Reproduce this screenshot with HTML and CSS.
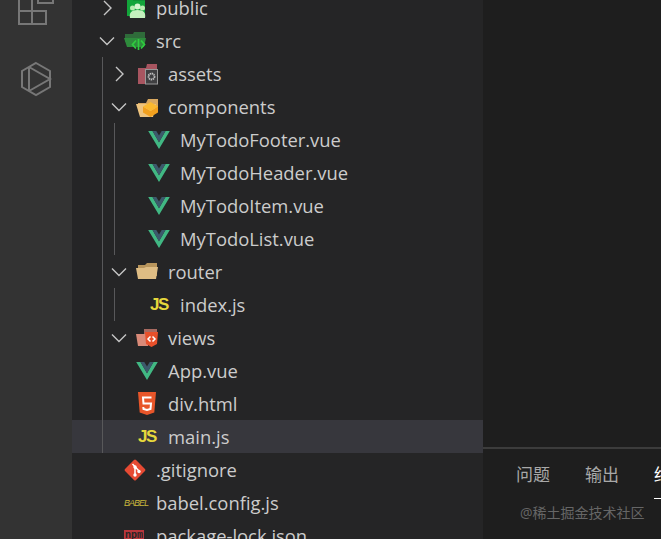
FILE: index.html
```html
<!DOCTYPE html>
<html lang="en">
<head>
  <meta charset="UTF-8">
  <meta name="viewport" content="width=device-width, initial-scale=1.0">
  <title>Explorer</title>
  <link rel="stylesheet" href="styles.css">
</head>
<body>
  <svg class="defs" width="0" height="0">
    <symbol id="right" viewBox="0 0 16 16"><path d="M5 1l7 7-7 7" fill="none" stroke="#c5c5c5" stroke-width="1.4"/></symbol>
    <symbol id="down" viewBox="0 0 16 16"><path d="M1 4.500l7 7 7-7" fill="none" stroke="#c5c5c5" stroke-width="1.4"/></symbol>
    <symbol id="vue" viewBox="0 2 24 20">
      <path d="M0 2h4.800L12 14.500 19.200 2H24L12 22z" fill="#41b883"/>
      <path d="M4.800 2H9l3 5 3-5h4.200L12 14.500z" fill="#3c5a6c"/>
    </symbol>
  </svg>

  <aside class="activity">
    <svg class="activity-icon" viewBox="0 0 36 36" width="36" height="36">
      <path d="M1 8v27h27V22H1M14 8v27M20 1v13h15V1" fill="none" stroke="#777" stroke-width="2"/>
    </svg>
    <svg class="activity-icon" viewBox="0 0 36 36" width="36" height="36">
      <path d="M18 2l14 8v16l-14 8-14-8V10zM11 6v24M11 6l21 12-21 12" fill="none" stroke="#777" stroke-width="2"/>
    </svg>
  </aside>

  <nav class="tree">
    <div class="row">
      <svg class="twistie"><use href="#right"/></svg>
      <span class="icon"><svg viewBox="0 0 24 24" width="24" height="24">
        <path d="M4 0h18v20H4z" fill="#12a53a"/>
        <path d="M11 0h11v4.500H10z" fill="#0d8030"/>
        <circle cx="9.500" cy="12" r="2.500" fill="#b7ecb0"/><circle cx="19.500" cy="12" r="2.500" fill="#b7ecb0"/><circle cx="14.500" cy="10.500" r="3" fill="#d5f5cf"/>
        <path d="M7 22c-1-5 1-8 7.500-8s8.500 3 7.500 8z" fill="#c4f0bd"/>
      </svg></span>
      <span class="label">public</span>
    </div>
    <div class="row">
      <svg class="twistie"><use href="#down"/></svg>
      <span class="icon"><svg viewBox="0 0 24 24" width="24" height="24">
        <path d="M2 5h8l1-2h11v10H2z" fill="#2f6b3a"/>
        <path d="M1 9h22l-2 9H4z" fill="#2e8b3c"/>
        <path d="M13 11.500l-3.500 4 3.500 4M18 11.500l3.500 4-3.500 4M15.500 10v11" fill="none" stroke="#2fcc3f" stroke-width="1.700"/>
      </svg></span>
      <span class="label">src</span>
    </div>
    <div class="row">
      <span class="guide"></span>
      <svg class="twistie"><use href="#right"/></svg>
      <span class="icon"><svg viewBox="0 0 24 24" width="24" height="24">
        <path d="M3 6h8l1-4h10v20H3z" fill="#a85560"/>
        <rect x="10.500" y="7.500" width="12" height="14.500" fill="#3f3f41" stroke="#999"/>
        <circle cx="16.500" cy="14.500" r="3" fill="none" stroke="#c0c0c0" stroke-width="1.800" stroke-dasharray="1.400 .6"/>
      </svg></span>
      <span class="label">assets</span>
    </div>
    <div class="row">
      <span class="guide"></span>
      <svg class="twistie"><use href="#down"/></svg>
      <span class="icon"><svg viewBox="0 0 24 24" width="24" height="24">
        <path d="M3 8h8l2-4h10v10H3z" fill="#d9a860"/>
        <path d="M1 9h20l-3 13H5z" fill="#efc47e"/>
        <path d="M8 11.500l7.500 4.500 7.500-4.500v6L15.500 22 8 17.500z" fill="#f2a01e"/>
        <path d="M15.500 7l7.500 4.500-7.500 4.500L8 11.500z" fill="#fbb92f"/>
      </svg></span>
      <span class="label">components</span>
    </div>
    <div class="row">
      <span class="guide"></span><span class="guide"></span>
      <span class="no-twistie"></span>
      <span class="icon"><svg class="vue" width="22" height="18"><use href="#vue"/></svg></span>
      <span class="label">MyTodoFooter.vue</span>
    </div>
    <div class="row">
      <span class="guide"></span><span class="guide"></span>
      <span class="no-twistie"></span>
      <span class="icon"><svg class="vue" width="22" height="18"><use href="#vue"/></svg></span>
      <span class="label">MyTodoHeader.vue</span>
    </div>
    <div class="row">
      <span class="guide"></span><span class="guide"></span>
      <span class="no-twistie"></span>
      <span class="icon"><svg class="vue" width="22" height="18"><use href="#vue"/></svg></span>
      <span class="label">MyTodoItem.vue</span>
    </div>
    <div class="row">
      <span class="guide"></span><span class="guide"></span>
      <span class="no-twistie"></span>
      <span class="icon"><svg class="vue" width="22" height="18"><use href="#vue"/></svg></span>
      <span class="label">MyTodoList.vue</span>
    </div>
    <div class="row">
      <span class="guide"></span>
      <svg class="twistie"><use href="#down"/></svg>
      <span class="icon"><svg viewBox="0 0 24 24" width="24" height="24">
        <path d="M3 5h7l2-2h10v13H3z" fill="#b8955c"/>
        <path d="M1 8h8l2-1h12l-2 12H3z" fill="#dfbd84"/>
      </svg></span>
      <span class="label">router</span>
    </div>
    <div class="row">
      <span class="guide"></span><span class="guide"></span>
      <span class="no-twistie"></span>
      <span class="icon"><span class="js">JS</span></span>
      <span class="label">index.js</span>
    </div>
    <div class="row">
      <span class="guide"></span>
      <svg class="twistie"><use href="#down"/></svg>
      <span class="icon"><svg viewBox="0 0 24 24" width="24" height="24">
        <path d="M9 3h13v5H9z" fill="#a86a60"/>
        <path d="M1 8h12v12H3z" fill="#d98a78"/>
        <path d="M10 6h13l-1 12-5.500 3-5.500-3z" fill="#e8502a"/>
        <path d="M15.500 10.500l-2.500 2.500 2.500 2.500M17.500 10.500L20 13l-2.500 2.500" fill="none" stroke="#fff" stroke-width="1.500"/>
      </svg></span>
      <span class="label">views</span>
    </div>
    <div class="row">
      <span class="guide"></span>
      <span class="no-twistie"></span>
      <span class="icon"><svg class="vue" width="22" height="18"><use href="#vue"/></svg></span>
      <span class="label">App.vue</span>
    </div>
    <div class="row">
      <span class="guide"></span>
      <span class="no-twistie"></span>
      <span class="icon"><svg viewBox="0 0 24 24" width="24" height="24">
        <path d="M3 0h18l-1.700 20.500L12 23l-7.300-2.500z" fill="#e8562a"/>
        <path d="M16.500 5.500H8l.5 6h7.500l-.5 5.500-3.500 1-3.500-1-.2-2" fill="none" stroke="#fff" stroke-width="2"/>
      </svg></span>
      <span class="label">div.html</span>
    </div>
    <div class="row selected">
      <span class="guide"></span>
      <span class="no-twistie"></span>
      <span class="icon"><span class="js">JS</span></span>
      <span class="label">main.js</span>
    </div>
    <div class="row">
      <span class="no-twistie"></span>
      <span class="icon"><svg viewBox="0 0 24 24" width="24" height="24">
        <rect x="4.200" y="4.200" width="15.600" height="15.600" rx="1.500" transform="rotate(45 12 12)" fill="#e64a33"/>
        <path d="M9.500 6l7 7.500M12 9v8" fill="none" stroke="#fff" stroke-width="1.500"/>
        <circle cx="12" cy="9" r="1.700" fill="#fff"/><circle cx="12" cy="17" r="1.700" fill="#fff"/><circle cx="16" cy="13.500" r="1.700" fill="#fff"/>
      </svg></span>
      <span class="label">.gitignore</span>
    </div>
    <div class="row">
      <span class="no-twistie"></span>
      <span class="icon"><span class="babel">BABEL</span></span>
      <span class="label">babel.config.js</span>
    </div>
    <div class="row">
      <span class="no-twistie"></span>
      <span class="icon"><span class="npm">npm</span></span>
      <span class="label">package-lock.json</span>
    </div>
  </nav>

  <main class="main">
    <div class="editor"></div>
    <section class="panel">
      <span class="tab">问题</span>
      <span class="tab">输出</span>
      <span class="tab active">终端</span>
    </section>
    <div class="watermark">@稀土掘金技术社区</div>
  </main>
</body>
</html>
```

FILE: styles.css
```css
* {
  margin: 0;
  padding: 0;
  box-sizing: border-box;
}

html,
body {
  height: 100%;
  overflow: hidden;
}

body {
  display: flex;
  background: #1e1e1e;
  font-family: "Open Sans", "Noto Sans CJK SC", sans-serif;
  color: #cccccc;
}

.defs {
  position: absolute;
}

/* Activity bar */
.activity {
  width: 72px;
  flex: none;
  display: flex;
  flex-direction: column;
  align-items: center;
  gap: 36px;
  background: #333333;
}

.activity-icon:first-child {
  margin-top: -11px;
}

/* File tree */
.tree {
  width: 411px;
  flex: none;
  margin-top: -9px;
  background: #252526;
}

.row {
  height: 33px;
  display: flex;
  align-items: center;
  padding-left: 30px;
}

.row.selected {
  background: #37373d;
}

.guide {
  width: 12px;
  flex: none;
  align-self: stretch;
  border-left: 1px solid #58585a;
}

.twistie {
  width: 16px;
  height: 16px;
  flex: none;
  margin: 0 4px 0 -3px;
}

.no-twistie {
  width: 17px;
  flex: none;
}

.icon {
  width: 37px;
  height: 24px;
  flex: none;
  display: flex;
  align-items: center;
  padding-left: 4px;
}

.vue {
  margin-left: 1px;
}

.label {
  font-size: 18.4px;
  white-space: nowrap;
}

.js {
  margin-left: 3px;
  font-family: "Liberation Sans", sans-serif;
  font-size: 17px;
  letter-spacing: -1.5px;
  font-weight: bold;
  color: #e6d83c;
}

.babel {
  margin-left: 1px;
  font-family: "Liberation Sans", sans-serif;
  font-size: 9px;
  letter-spacing: -1px;
  font-style: italic;
  color: #c9b73c;
}

.npm {
  margin-left: 1px;
  padding: 0 1px;
  font-family: "Liberation Mono", monospace;
  font-size: 10px;
  line-height: 11px;
  font-weight: bold;
  color: #252526;
  background: #b8363c;
}

/* Editor and panel */
.main {
  position: relative;
  flex: 1;
  display: flex;
  flex-direction: column;
}

.editor {
  flex: 1;
}

.panel {
  height: 92px;
  flex: none;
  display: flex;
  gap: 35px;
  padding-left: 33px;
  border-top: 2px solid #3c3c3c;
}

.tab {
  flex: none;
  height: 50px;
  padding-top: 14px;
  font-size: 17px;
  line-height: 24px;
  color: #a8a8a8;
}

.tab.active {
  color: #ffffff;
  border-bottom: 1px solid #ffffff;
}

.watermark {
  position: absolute;
  left: 37px;
  top: 504px;
  font-size: 14px;
  line-height: 18px;
  white-space: nowrap;
  color: #666666;
}
```
